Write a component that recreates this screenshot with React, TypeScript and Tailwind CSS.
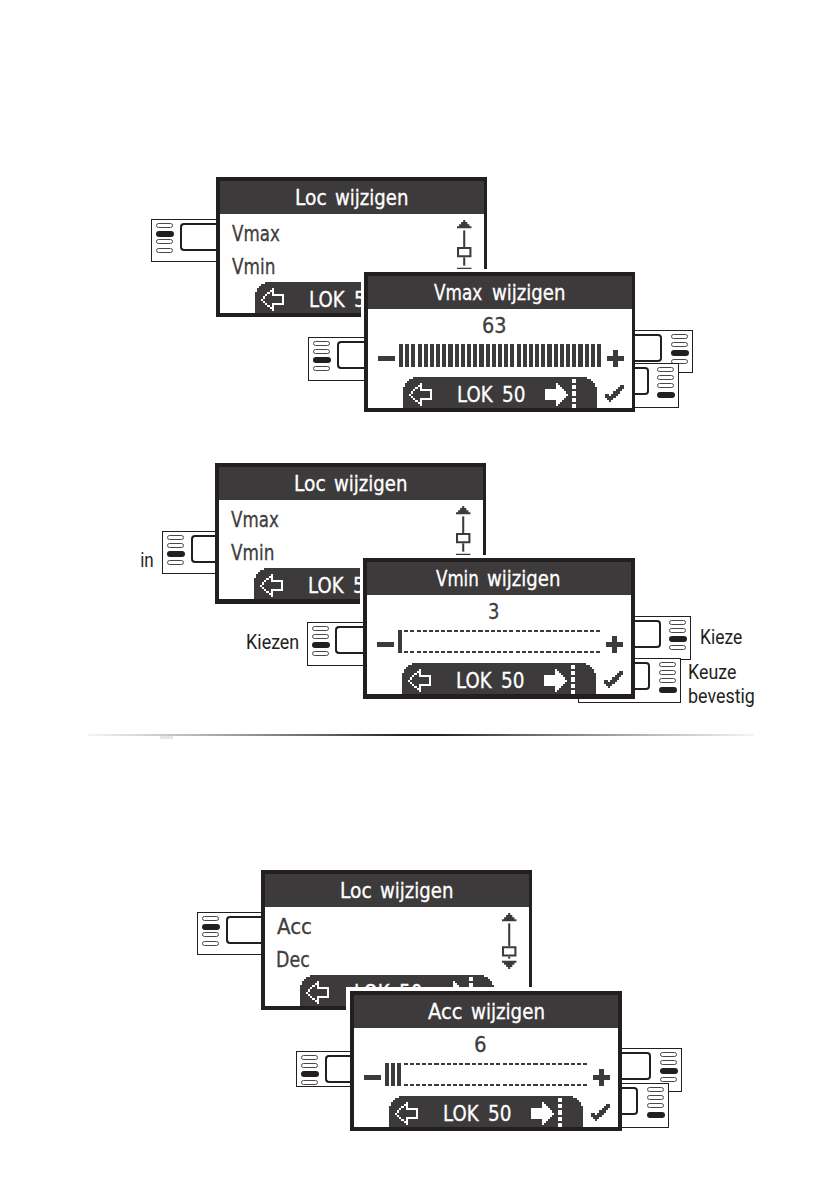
import { useLayoutEffect, useRef, useState, type ReactNode } from "react";

/** Text squeezed or stretched so that its ink spans exactly `w` pixels. */
function FitText({ text, w }: { text: string; w: number }) {
  const ref = useRef<HTMLSpanElement>(null);
  const [fit, setFit] = useState({ scale: 1, shift: 0 });

  useLayoutEffect(() => {
    const ctx = document.createElement("canvas").getContext("2d");
    if (!ref.current || !ctx) return;
    const cs = getComputedStyle(ref.current);
    ctx.font = `${cs.fontWeight} ${cs.fontSize} ${cs.fontFamily}`;
    const m = ctx.measureText(text);
    const ink = m.actualBoundingBoxLeft + m.actualBoundingBoxRight;
    const scale = w / ink;
    setFit({ scale, shift: m.actualBoundingBoxLeft * scale });
  }, [text, w]);

  return (
    <span className="inline-block shrink-0 whitespace-nowrap leading-none" style={{ width: w }}>
      <span
        ref={ref}
        className="inline-block origin-left"
        style={{ transform: `translateX(${fit.shift}px) scaleX(${fit.scale})` }}
      >
        {text}
      </span>
    </span>
  );
}

type Word = [string, number];

function Frame({
  title,
  className,
  titlePad,
  wordGap,
  children,
}: {
  title: Word[];
  className: string;
  titlePad: string;
  wordGap: string;
  children: ReactNode;
}) {
  return (
    <section
      className={`absolute flex flex-col border-[#231f20] bg-white font-['DejaVu_Sans_Condensed','DejaVu_Sans',sans-serif] text-[22px] text-[#403d3e] [-webkit-text-stroke:0.3px] ${className}`}
    >
      <header className={`flex h-[33px] shrink-0 bg-[#3d3a3b] pt-[6px] text-white ${titlePad} ${wordGap}`}>
        {title.map(([t, w]) => (
          <FitText key={t} text={t} w={w} />
        ))}
      </header>
      {children}
    </section>
  );
}

function Footer({ confirm }: { confirm?: boolean }) {
  return (
    <footer className="relative flex h-[31px] shrink-0 pl-[90px] pt-[6.5px] text-white">
      <svg className="absolute left-0 top-0 h-[31px] w-[264px]" viewBox="0 49 128 15" preserveAspectRatio="none" shapeRendering="crispEdges">
        <path
          fill="#3d3a3b"
          d="M22 49H106V50H108V51H109V52H110V54H111V64H17V54H18V52H19V51H20V50H22Z"
        />
        <path
          fill="#fff"
          d="M20 57h1v1h-1zM21 56h1v1h-1zM22 55h1v1h-1zM23 54h1v1h-1zM24 53h1v1h-1zM25 52h1v4h-1zM21 58h1v1h-1zM22 59h1v1h-1zM23 60h1v1h-1zM24 61h1v1h-1zM25 59h1v4h-1zM26 55h5v5h-5v-1h4v-3h-4z"
        />
        <path
          fill="#fff"
          d="M86 55h5v-3h1v1h1v1h1v1h1v1h1v1h1v1h-1v1h-1v1h-1v1h-1v1h-1v1h-1v-3h-5z"
        />
        <path fill="#fff" d="M99 50h2v2h-2zM99 53h2v2h-2zM99 56h2v2h-2zM99 59h2v2h-2zM99 62h2v2h-2z" />
        {confirm && (
          <path
            fill="#3d3a3b"
            d="M122 53h2v2h-1v1h-1v1h-1v1h-1v1h-1v1h-1v1h-1v-1h-1v-1h-1v-2h2v1h1v-1h1v-1h1v-1h1v-1h1v-1h1z"
          />
        )}
      </svg>
      <span className="relative flex gap-[9px]">
        <FitText text="LOK" w={35.5} />
        <FitText text="50" w={22} />
      </span>
    </footer>
  );
}

function MenuScreen({ className, items, knob }: { className: string; items: Word[]; knob: number }) {
  return (
    <Frame title={[["Loc", 30], ["wijzigen", 72]]} className={className} titlePad="pl-[75.5px]" wordGap="gap-[9.5px]">
      <div className="flex h-[68px] shrink-0 justify-between pl-[12px] pr-[12.4px]">
        <div className="flex flex-col gap-[11px] pt-[3px]">
          {items.map(([t, w]) => (
            <div key={t} className="h-[22px]">
              <FitText text={t} w={w} />
            </div>
          ))}
        </div>
        <svg className="mt-[6px] h-[56px] w-[14.44px]" viewBox="0 19 7 27" preserveAspectRatio="none" fill="#3d3a3b">
          <path d="M3 19h1v1h1v1h1v1h1v1H0v-1h1v-1h1v-1h1zM0 42h7v1H6v1H5v1H4v1H3v-1H2v-1H1v-1H0z" />
          <path d={`M3 24h1V${knob}H3z`} />
          <path fillRule="evenodd" d={`M0 ${knob}h7v5H0zM1 ${knob + 1}v3h5v-3z`} />
          <path d={`M3 ${knob + 5}h1V41H3z`} />
        </svg>
      </div>
      <Footer />
    </Frame>
  );
}

function ValueScreen({
  className,
  title,
  titlePad,
  value,
  valueWidth,
  bars,
}: {
  className: string;
  title: Word[];
  titlePad: string;
  value: string;
  valueWidth: number;
  bars: number;
}) {
  const dashes = Array.from({ length: 33 - bars }, (_, i) => 15 + 3 * (i + bars));
  return (
    <Frame title={title} className={className} titlePad={titlePad} wordGap="gap-[9.5px]">
      <div className="flex h-[68px] shrink-0 flex-col">
        <div className="flex h-[29px] justify-center pr-[11px] pt-[6px]">
          <FitText text={value} w={valueWidth} />
        </div>
        <svg className="h-[39px] w-[264px]" viewBox="0 30 128 19" preserveAspectRatio="none" fill="#3d3a3b" shapeRendering="crispEdges">
          <path d="M5 39h8v2H5zM116 39h3v-3h2v3h3v2h-3v3h-2v-3h-3z" />
          {Array.from({ length: bars }, (_, i) => (
            <rect key={i} x={15 + 3 * i} y={33} width={2} height={11} />
          ))}
          {dashes.map((x) => (
            <path key={x} d={`M${x} 33h2v1h-2zM${x} 43h2v1h-2z`} />
          ))}
        </svg>
      </div>
      <Footer confirm />
    </Frame>
  );
}

/** Hardware button next to a screen: indicator pills and a partly hidden key. */
function Key({
  side,
  active,
  className,
  keyClass,
}: {
  side: "left" | "right";
  active: number;
  className: string;
  keyClass: string;
}) {
  const pills = (
    <div className="flex w-[18px] shrink-0 flex-col items-center pt-[3px]">
      {[0, 1, 2, 3].map((i) => (
        <span key={i} className="flex h-[8.2px] w-[18px] items-start justify-center">
          <span
            className={
              i === active
                ? "h-[6px] w-[18px] rounded-full bg-[#231f20]"
                : "h-[5px] w-[17px] rounded-full border border-[#4a4748] bg-white"
            }
          />
        </span>
      ))}
    </div>
  );
  return (
    <div className={`absolute flex border-y border-[#231f20] bg-white ${side === "left" ? "border-l" : "border-r"} ${className}`}>
      {side === "left" ? (
        <>
          <div className="pl-[3.5px]">{pills}</div>
          <div className={`ml-auto mt-[3px] h-[28px] rounded-l-[4px] border-2 border-r-0 border-[#231f20] ${keyClass}`} />
        </>
      ) : (
        <>
          <div className={`mt-[3px] h-[28px] rounded-r-[4px] border-2 border-l-0 border-[#231f20] ${keyClass}`} />
          <div className="ml-auto pr-[3.5px]">{pills}</div>
        </>
      )}
    </div>
  );
}

function Label({ text, w, className }: { text: string; w: number; className: string }) {
  return (
    <div className={`absolute flex font-['Roboto',sans-serif] text-[19.5px] text-[#231f20] ${className}`}>
      <FitText text={text} w={w} />
    </div>
  );
}

export default function App() {
  return (
    <main className="relative h-[1191px] w-[839px] overflow-hidden bg-white">
      <Key side="left" active={1} className="left-[151px] top-[219px] h-[43px] w-[65px]" keyClass="w-[36px]" />
      <MenuScreen
        className="left-[216px] top-[177px] h-[140px] w-[271px] border-4 border-r-[3px]"
        items={[["Vmax", 48], ["Vmin", 42]]}
        knob={32}
      />
      <Key side="right" active={2} className="left-[630px] top-[330px] h-[43px] w-[63px]" keyClass="w-[32px]" />
      <Key side="right" active={3} className="left-[630px] top-[363px] h-[45px] w-[49px]" keyClass="w-[19px]" />
      <ValueScreen
        className="left-[364px] top-[272px] h-[140px] w-[271px] border-4 border-r-[3px] shadow-[-3px_-3px_0_0_#fff]"
        title={[["Vmax", 48.5], ["wijzigen", 72]]}
        titlePad="pl-[66px]"
        value="63"
        valueWidth={23}
        bars={33}
      />
      <Key side="left" active={2} className="left-[308px] top-[337px] h-[44px] w-[56px]" keyClass="w-[27px]" />

      <Label text="in" w={12} className="left-[141px] top-[551px]" />
      <Key side="left" active={2} className="left-[162px] top-[531px] h-[43px] w-[53px]" keyClass="w-[24px]" />
      <MenuScreen
        className="left-[215px] top-[463px] h-[141px] w-[271px] border-4 border-b-[5px] border-r-[3px]"
        items={[["Vmax", 48], ["Vmin", 42]]}
        knob={32}
      />
      <Label text="Kiezen" w={51.5} className="left-[247px] top-[633px]" />
      <Key side="right" active={2} className="left-[630px] top-[616px] h-[44px] w-[61px]" keyClass="w-[31px]" />
      <Key side="right" active={3} className="left-[578px] top-[658px] h-[45px] w-[103px] border-l" keyClass="w-[71px]" />
      <ValueScreen
        className="left-[363px] top-[558px] h-[141px] w-[272px] border-4 border-b-[5px] shadow-[-3px_-3px_0_0_#fff]"
        title={[["Vmin", 41.5], ["wijzigen", 72]]}
        titlePad="pl-[69px]"
        value="3"
        valueWidth={10}
        bars={1}
      />
      <Key side="left" active={2} className="left-[307px] top-[622px] h-[44px] w-[56px]" keyClass="w-[28px]" />
      <Label text="Kieze" w={41} className="left-[701px] top-[628px]" />
      <Label text="Keuze" w={47} className="left-[689px] top-[663px]" />
      <Label text="bevestig" w={65} className="left-[689px] top-[687px]" />

      <div className="absolute left-[160px] top-[734px] h-[5px] w-[13px] bg-[#e6e6e6]" />
      <div className="absolute left-[88px] top-[734px] h-[2px] w-[666px] bg-[linear-gradient(90deg,#f4f4f4,#bdbcbc_15%,#6b696a_34%,#231f20_48%,#231f20_52%,#6b696a_66%,#bdbcbc_85%,#f4f4f4)]" />

      <Key side="left" active={1} className="left-[197px] top-[912px] h-[43px] w-[64px]" keyClass="w-[35px]" />
      <MenuScreen
        className="left-[261px] top-[870px] h-[140px] w-[271px] border-4 border-r-[3px]"
        items={[["Acc", 34], ["Dec", 32]]}
        knob={35}
      />
      <Key side="right" active={2} className="left-[617px] top-[1048px] h-[44px] w-[65px]" keyClass="w-[34px]" />
      <Key side="right" active={3} className="left-[617px] top-[1083px] h-[45px] w-[52px]" keyClass="w-[21px]" />
      <ValueScreen
        className="left-[350px] top-[991px] h-[140px] w-[272px] border-4 shadow-[-4px_-4px_0_0_#fff]"
        title={[["Acc", 33.5], ["wijzigen", 72.5]]}
        titlePad="pl-[74px]"
        value="6"
        valueWidth={11}
        bars={3}
      />
      <Key side="left" active={2} className="left-[296px] top-[1051px] h-[36px] w-[54px]" keyClass="w-[25px]" />
    </main>
  );
}
